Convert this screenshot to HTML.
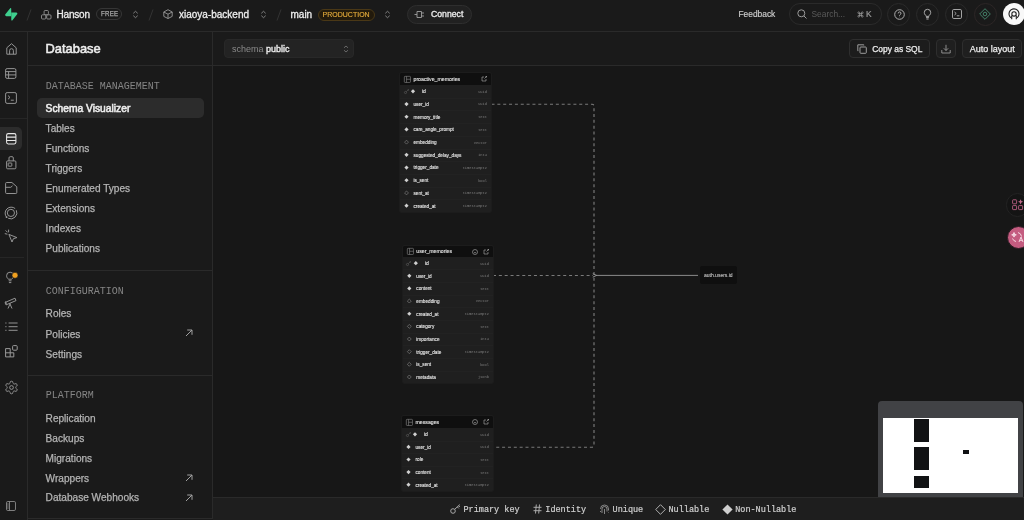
<!DOCTYPE html>
<html><head><meta charset="utf-8">
<style>
*{box-sizing:border-box;margin:0;padding:0}
html,body{width:1024px;height:520px;overflow:hidden;background:#1a1a1a;font-family:"Liberation Sans",sans-serif;color:#ededed}
#wrap{position:absolute;left:0;top:0;width:1024px;height:520px;will-change:transform}
.a{position:absolute}
.t{position:absolute;white-space:nowrap;line-height:1}
.tm{font-family:"Liberation Mono",monospace}
svg{position:absolute;overflow:visible}
#top{left:0;top:0;width:1024px;height:32px;background:#1a1a1a;border-bottom:1px solid #2a2a2a}
#rail{left:0;top:32px;width:28px;height:488px;background:#1a1a1a;border-right:1px solid #2a2a2a}
#side{left:28px;top:32px;width:185px;height:487px;background:#1a1a1a;border-right:1px solid #2a2a2a;border-bottom:1px solid #2a2a2a}
#main{left:213px;top:32px;width:811px;height:34px;background:#1a1a1a}
#canvas{left:213px;top:66px;width:811px;height:431px;background:#171717}
.item{position:absolute;left:45.6px;font-size:10.1px;color:#b4b4b4;white-space:nowrap;line-height:1;-webkit-text-stroke:0.25px #b4b4b4}
.sec{position:absolute;left:45.8px;font-family:"Liberation Mono",monospace;font-size:10px;color:#858585;white-space:nowrap;line-height:1}
.ext{position:absolute;left:185px;width:8px;height:8px}
</style></head><body><div id="wrap">
<div id="rail" class="a"></div>
<div id="side" class="a"></div>
<div id="main" class="a"></div>
<div id="canvas" class="a"></div>

<!-- TOP BAR -->
<div id="top" class="a"></div>
<svg style="left:5px;top:7.5px" width="12.5" height="12.7" viewBox="0 0 109 113"><path d="M63.7 110.3c-2.9 3.6-8.7 1.6-8.8-3l-1-67.4h45.4c8.2 0 12.8 9.5 7.7 15.9z" fill="#3ecf8e"/><path d="M45.3 2.1c2.9-3.6 8.7-1.6 8.8 3l.4 67.4H9.8c-8.2 0-12.8-9.5-7.7-15.9z" fill="#3ecf8e"/></svg>
<svg style="left:26px;top:9px" width="6" height="12"><path d="M5 0.5L1 11.5" stroke="#333" stroke-width="1"/></svg>
<!-- org icon -->
<svg style="left:41px;top:9.5px" width="10.5" height="9.5" viewBox="0 0 10.5 9.5" fill="none" stroke="#9a9a9a" stroke-width="0.85"><rect x="3.1" y="0.5" width="4.3" height="4.2" rx="1"/><rect x="0.5" y="4.8" width="4.3" height="4.2" rx="1"/><rect x="5.7" y="4.8" width="4.3" height="4.2" rx="1"/></svg>
<div class="t" style="left:56.5px;top:9.6px;font-size:10px;color:#ededed;letter-spacing:-0.2px;-webkit-text-stroke:0.3px #ededed">Hanson</div>
<div class="a" style="left:96px;top:8px;width:26px;height:12px;border:1px solid #363636;border-radius:6px"></div>
<div class="t" style="left:100.7px;top:10.1px;font-size:7.3px;color:#a8a8a8;-webkit-text-stroke:0.25px #a8a8a8;transform:scaleX(0.84);transform-origin:0 0;letter-spacing:0.3px">FREE</div>
<svg style="left:132px;top:10px" width="7" height="9" viewBox="0 0 7 9" fill="none" stroke="#8a8a8a" stroke-width="0.9"><path d="M1.3 3.3L3.5 1.3L5.7 3.3M1.3 5.7L3.5 7.7L5.7 5.7"/></svg>
<svg style="left:148px;top:9px" width="6" height="12"><path d="M5 0.5L1 11.5" stroke="#333" stroke-width="1"/></svg>
<!-- cube -->
<svg style="left:163px;top:9px" width="10" height="10" viewBox="0 0 10 10" fill="none" stroke="#9a9a9a" stroke-width="0.9"><path d="M5 0.7L9.2 3v4.4L5 9.5 0.8 7.4V3z M0.8 3L5 5.2 9.2 3 M5 5.2v4.3"/></svg>
<div class="t" style="left:179px;top:9.6px;font-size:10px;color:#ededed;-webkit-text-stroke:0.3px #ededed">xiaoya-backend</div>
<svg style="left:260px;top:10px" width="7" height="9" viewBox="0 0 7 9" fill="none" stroke="#8a8a8a" stroke-width="0.9"><path d="M1.3 3.3L3.5 1.3L5.7 3.3M1.3 5.7L3.5 7.7L5.7 5.7"/></svg>
<svg style="left:276px;top:9px" width="6" height="12"><path d="M5 0.5L1 11.5" stroke="#333" stroke-width="1"/></svg>
<div class="t" style="left:290.5px;top:9.6px;font-size:10px;color:#ededed;-webkit-text-stroke:0.3px #ededed">main</div>
<div class="a" style="left:318px;top:8.5px;width:57px;height:12.5px;border:1px solid #4a3816;background:#221a0c;border-radius:6.5px"></div>
<div class="t" style="left:322.6px;top:10.7px;font-size:7px;color:#e0a83a;-webkit-text-stroke:0.15px #e0a83a">PRODUCTION</div>
<svg style="left:384px;top:10px" width="7" height="9" viewBox="0 0 7 9" fill="none" stroke="#8a8a8a" stroke-width="0.9"><path d="M1.3 3.3L3.5 1.3L5.7 3.3M1.3 5.7L3.5 7.7L5.7 5.7"/></svg>
<div class="a" style="left:407px;top:5px;width:65px;height:19px;border:1px solid #2e2e2e;background:#212121;border-radius:10px"></div>
<svg style="left:414px;top:10px" width="11" height="9" viewBox="0 0 11 9" fill="none" stroke="#a0a0a0" stroke-width="0.9"><path d="M0.5 4.5H3M3 1.5h4.5v6H3zM7.5 3H10M7.5 6H10"/></svg>
<div class="t" style="left:431px;top:10.3px;font-size:8.7px;color:#ededed;-webkit-text-stroke:0.3px #ededed">Connect</div>

<div class="t" style="left:738.5px;top:10.2px;font-size:8.4px;color:#cfcfcf;-webkit-text-stroke:0.15px #cfcfcf">Feedback</div>
<div class="a" style="left:789px;top:3px;width:93px;height:22px;border:1px solid #2a2a2a;border-radius:11px"></div>
<svg style="left:797px;top:9px" width="10" height="10" viewBox="0 0 10 10" fill="none" stroke="#9a9a9a" stroke-width="1"><circle cx="4.3" cy="4.3" r="3.5"/><path d="M6.9 6.9L9.5 9.5"/></svg>
<div class="t" style="left:811.5px;top:10px;font-size:8.4px;color:#5a5a5a">Search...</div>
<svg style="left:857px;top:10.5px" width="7" height="7" viewBox="0 0 24 24" fill="none" stroke="#9a9a9a" stroke-width="2.6"><path d="M15 6v12a3 3 0 1 0 3-3H6a3 3 0 1 0 3 3V6a3 3 0 1 0-3 3h12a3 3 0 1 0-3-3"/></svg><div class="t" style="left:866px;top:10px;font-size:8.4px;color:#9a9a9a;-webkit-text-stroke:0.2px #9a9a9a">K</div>
<!-- circles -->
<div class="a" style="left:887px;top:3px;width:23px;height:23px;border:1px solid #2a2a2a;border-radius:50%"></div>
<svg style="left:893.5px;top:8.5px" width="11" height="11" viewBox="0 0 11 11" fill="none" stroke="#b4b4b4" stroke-width="0.95"><circle cx="5.5" cy="5.5" r="4.8"/><path d="M4.2 4.4a1.4 1.4 0 1 1 2 1.2c-.4.3-.7.5-.7 1v.2"/><circle cx="5.5" cy="7.9" r="0.4" fill="#b4b4b4" stroke="none"/></svg>
<div class="a" style="left:916px;top:3px;width:23px;height:23px;border:1px solid #2a2a2a;border-radius:50%"></div>
<svg style="left:923px;top:8px" width="9" height="12" viewBox="0 0 9 12" fill="none" stroke="#b4b4b4" stroke-width="0.95"><path d="M3.1 7.6C2 7 1.3 5.9 1.3 4.5a3.2 3.2 0 0 1 6.4 0c0 1.4-.7 2.5-1.8 3.1v.8H3.1z"/><path d="M3.1 9.6h2.8M3.4 11h2.2"/></svg>
<div class="a" style="left:945px;top:3px;width:23px;height:23px;border:1px solid #2a2a2a;border-radius:50%"></div>
<svg style="left:951.5px;top:9px" width="10" height="10" viewBox="0 0 10 10" fill="none" stroke="#b4b4b4" stroke-width="0.9"><rect x="0.5" y="0.5" width="9" height="9" rx="1.3"/><path d="M2.5 3L4.2 4.5 2.5 6M4.8 6.8H7.4"/></svg>
<div class="a" style="left:974px;top:3px;width:23px;height:23px;border:1px solid #2c2626;border-radius:50%"></div>
<svg style="left:979px;top:8px" width="12" height="12" viewBox="0 0 12 12" fill="none" stroke="#4a9275" stroke-width="0.85"><path d="M6 0.7L11.3 6 6 11.3 0.7 6z"/><circle cx="6" cy="6" r="1.8"/></svg>
<div class="a" style="left:1003px;top:3px;width:22px;height:22px;background:#f8f8f8;border-radius:50%"></div>
<svg style="left:1008px;top:8px" width="12" height="12" viewBox="0 0 12 12" fill="none" stroke="#1a1a1a" stroke-width="1.1"><path d="M2.79 9.73A5 5 0 1 1 9.21 9.73"/><circle cx="6" cy="5.9" r="2.2"/><path d="M3.7 7.4V11.3M8.3 7.4V11.3"/></svg>

<!-- RAIL -->
<svg style="left:5.5px;top:42.8px" width="11" height="12" viewBox="0 0 11 12" fill="none" stroke="#9a9a9a" stroke-width="0.95"><path d="M0.8 11.2V4.8L5.5 0.7 10.2 4.8v6.4zM3.6 11.2V7.6a1.9 1.9 0 0 1 3.8 0v3.6"/></svg>
<svg style="left:5px;top:68px" width="11.5" height="11" viewBox="0 0 11.5 11" fill="none" stroke="#9a9a9a" stroke-width="0.95"><rect x="0.6" y="0.6" width="10.3" height="9.8" rx="1.5"/><path d="M0.6 3.6H10.9M0.6 6.9H10.9M3.6 3.6v6.8"/></svg>
<svg style="left:5px;top:92px" width="12" height="12" viewBox="0 0 12 12" fill="none" stroke="#9a9a9a" stroke-width="0.95"><rect x="0.6" y="0.6" width="10.8" height="10.8" rx="1.5"/><path d="M3 3.6L5 5.4 3 7.2M5.8 8.2H8.8"/></svg>
<div class="a" style="left:0px;top:118px;width:27px;height:1px;background:#262626"></div>
<div class="a" style="left:0px;top:257px;width:24px;height:1px;background:#262626"></div>
<div class="a" style="left:-5px;top:127px;width:27px;height:23px;background:#2c2c2c;border-radius:5px"></div>
<svg style="left:5.8px;top:133.3px" width="10.5" height="11.5" viewBox="0 0 10.5 11.5" fill="none" stroke="#e8e8e8" stroke-width="1.05"><rect x="0.6" y="0.6" width="9.3" height="10.3" rx="1.6"/><path d="M0.6 4.1H9.9M0.6 7.4H9.9"/></svg>
<svg style="left:5.5px;top:156px" width="11" height="13.5" viewBox="0 0 11 13.5" fill="none" stroke="#9a9a9a" stroke-width="0.95"><path d="M3 4.9V1.9a1.2 1.2 0 0 1 1.2-1.2h1.9A1.2 1.2 0 0 1 7.3 1.9v3"/><rect x="0.6" y="4.9" width="9.3" height="7.9" rx="1"/><rect x="2.2" y="7" width="3.6" height="3.2" rx="0.4"/></svg>
<svg style="left:4.8px;top:182px" width="12.5" height="12" viewBox="0 0 12.5 12" fill="none" stroke="#9a9a9a" stroke-width="0.95"><path d="M0.6 1.5a1 1 0 0 1 1-1h5.3l4.9 4.3v5.7a1 1 0 0 1-1 1H1.6a1 1 0 0 1-1-1z"/><path d="M0.6 5.3H5.8L7.5 3.8"/></svg>
<svg style="left:4px;top:205.5px" width="14" height="14" viewBox="0 0 14 14" fill="none" stroke="#9a9a9a" stroke-width="0.95"><circle cx="6.9" cy="6.9" r="3.6"/><path d="M2.6 11.2A6.1 6.1 0 0 1 11.2 2.6M12.3 4.2A6.1 6.1 0 0 1 4.2 12.3"/><circle cx="2.6" cy="11.2" r="0.9" fill="#9a9a9a" stroke="none"/></svg>
<svg style="left:4px;top:228px" width="14" height="15" viewBox="0 0 14 15" fill="none" stroke="#9a9a9a" stroke-width="0.95"><path d="M4.9 6.4L12.9 9.6 9.4 10.7 8 14z"/><path d="M4.6 1.6V4.3M0.8 5.6L3.4 6.2M1.6 2.4L3.5 4.3"/></svg>
<svg style="left:5px;top:270px" width="14" height="15" viewBox="0 0 14 15" fill="none" stroke="#9a9a9a" stroke-width="0.95"><path d="M3.6 9.2C2.4 8.5 1.6 7.2 1.6 5.7a3.5 3.5 0 0 1 7 0c0 1.5-.8 2.8-2 3.5z"/><path d="M3.7 10.8h2.8M3.9 12.6h2.4"/><circle cx="10" cy="5.3" r="3" fill="#f0a020" stroke="#1a1a1a" stroke-width="0.6"/></svg>
<svg style="left:4px;top:296px" width="14" height="13" viewBox="0 0 14 13" fill="none" stroke="#9a9a9a" stroke-width="0.95"><path d="M1 6.5l10-4.3 1 2.4-10 4.3z M6 8l-2 4.5M6 8l2 4.5M6 8v-1"/><path d="M1.5 5.5l1 2.3"/></svg>
<svg style="left:4.5px;top:321px" width="14" height="11" viewBox="0 0 14 11" fill="none" stroke="#9a9a9a" stroke-width="0.95"><path d="M0.3 2h1.2M3.6 2h9M0.3 5.7h1.2M3.6 5.7h9M0.3 9.3h1.2M3.6 9.3h9"/></svg>
<svg style="left:4.8px;top:345px" width="13" height="12.5" viewBox="0 0 13 12.5" fill="none" stroke="#9a9a9a" stroke-width="1"><path d="M0.6 3.6h4.6v8.3H0.6zM0.6 7.8h8.2v4.1H5.2"/><rect x="7.6" y="0.6" width="4.6" height="4.6" rx="0.9"/></svg>
<svg style="left:3.6px;top:380.4px" width="15" height="15" viewBox="0 0 24 24" fill="none" stroke="#9a9a9a" stroke-width="1.5"><path d="M12.22 2h-.44a2 2 0 0 0-2 2v.18a2 2 0 0 1-1 1.73l-.43.25a2 2 0 0 1-2 0l-.15-.08a2 2 0 0 0-2.73.73l-.22.38a2 2 0 0 0 .73 2.73l.15.1a2 2 0 0 1 1 1.72v.51a2 2 0 0 1-1 1.74l-.15.09a2 2 0 0 0-.73 2.73l.22.38a2 2 0 0 0 2.73.73l.15-.08a2 2 0 0 1 2 0l.43.25a2 2 0 0 1 1 1.73V20a2 2 0 0 0 2 2h.44a2 2 0 0 0 2-2v-.18a2 2 0 0 1 1-1.73l.43-.25a2 2 0 0 1 2 0l.15.08a2 2 0 0 0 2.73-.73l.22-.39a2 2 0 0 0-.73-2.73l-.15-.08a2 2 0 0 1-1-1.74v-.5a2 2 0 0 1 1-1.74l.15-.09a2 2 0 0 0 .73-2.73l-.22-.38a2 2 0 0 0-2.73-.73l-.15.08a2 2 0 0 1-2 0l-.43-.25a2 2 0 0 1-1-1.73V4a2 2 0 0 0-2-2z"/><circle cx="12" cy="12" r="3"/></svg>
<svg style="left:6px;top:500.5px" width="10" height="10" viewBox="0 0 10 10" fill="none" stroke="#8a8a8a" stroke-width="0.9"><rect x="0.5" y="0.5" width="9" height="9" rx="1.3"/><path d="M3.5 0.5v9M1.2 3h1.5M1.2 5h1.5M1.2 7h1.5"/></svg>

<!-- SIDEBAR -->
<div class="t" style="left:45.5px;top:43.3px;font-size:12.9px;font-weight:400;color:#ededed;-webkit-text-stroke:0.55px #ededed">Database</div>
<div class="a" style="left:28px;top:65px;width:184px;height:1px;background:#2a2a2a"></div>
<div class="sec" style="top:81.7px">DATABASE MANAGEMENT</div>
<div class="a" style="left:37px;top:97.8px;width:167px;height:20.2px;background:#2c2c2c;border-radius:5px"></div>
<div class="item" style="top:104.0px;color:#ededed;font-size:10.25px;-webkit-text-stroke:0.55px #ededed">Schema Visualizer</div>
<div class="item" style="top:124.0px">Tables</div>
<div class="item" style="top:144.0px">Functions</div>
<div class="item" style="top:164.0px">Triggers</div>
<div class="item" style="top:184.0px">Enumerated Types</div>
<div class="item" style="top:204.0px">Extensions</div>
<div class="item" style="top:224.0px">Indexes</div>
<div class="item" style="top:244.0px">Publications</div>
<div class="a" style="left:28px;top:270px;width:184px;height:1px;background:#2a2a2a"></div>
<div class="sec" style="top:287.2px">CONFIGURATION</div>
<div class="item" style="top:309.3px">Roles</div>
<div class="item" style="top:329.5px">Policies</div>
<div class="item" style="top:349.7px">Settings</div>
<svg class="ext" style="top:328.5px" viewBox="0 0 8 8" fill="none" stroke="#a8a8a8" stroke-width="0.95"><path d="M1 7L7 1M2.2 1H7v4.8"/></svg>
<div class="a" style="left:28px;top:375px;width:184px;height:1px;background:#2a2a2a"></div>
<div class="sec" style="top:391.2px">PLATFORM</div>
<div class="item" style="top:413.8px">Replication</div>
<div class="item" style="top:433.7px">Backups</div>
<div class="item" style="top:453.6px">Migrations</div>
<div class="item" style="top:473.5px">Wrappers</div>
<div class="item" style="top:493.4px">Database Webhooks</div>
<svg class="ext" style="top:473.5px" viewBox="0 0 8 8" fill="none" stroke="#a8a8a8" stroke-width="0.95"><path d="M1 7L7 1M2.2 1H7v4.8"/></svg>
<svg class="ext" style="top:493.5px" viewBox="0 0 8 8" fill="none" stroke="#a8a8a8" stroke-width="0.95"><path d="M1 7L7 1M2.2 1H7v4.8"/></svg>

<!-- TOOLBAR -->
<div class="a" style="left:213px;top:65px;width:811px;height:1px;background:#2a2a2a"></div>
<div class="a" style="left:224px;top:39px;width:130px;height:19px;background:#232323;border:1px solid #282828;border-radius:4px"></div>
<div class="t" style="left:232px;top:45.3px;font-size:9px;color:#8a8a8a">schema <span style="color:#ededed;-webkit-text-stroke:0.35px #ededed">public</span></div>
<svg style="left:342.5px;top:44.5px" width="6" height="8" viewBox="0 0 6 8" fill="none" stroke="#7a7a7a" stroke-width="0.8"><path d="M1 2.8L3 1 5 2.8M1 5.2L3 7 5 5.2"/></svg>
<div class="a" style="left:849px;top:39px;width:81px;height:19px;background:#1c1c1c;border:1px solid #2e2e2e;border-radius:4px"></div>
<svg style="left:857px;top:44px" width="10" height="10" viewBox="0 0 10 10" fill="none" stroke="#b4b4b4" stroke-width="0.85"><rect x="3" y="3" width="6.3" height="6.3" rx="0.8"/><path d="M1.3 6.8H0.8V0.8h6v0.6"/></svg>
<div class="t" style="left:872.2px;top:45.2px;font-size:8.45px;color:#ededed;-webkit-text-stroke:0.25px #ededed">Copy as SQL</div>
<div class="a" style="left:936px;top:39px;width:20px;height:19px;background:#1f1f1f;border:1px solid #2e2e2e;border-radius:4px"></div>
<svg style="left:941px;top:43.5px" width="10" height="10" viewBox="0 0 10 10" fill="none" stroke="#a0a0a0" stroke-width="0.85"><path d="M5 0.8V6.5M2.8 4.3L5 6.5 7.2 4.3M0.8 6v3h8.4V6"/></svg>
<div class="a" style="left:962px;top:39px;width:60px;height:19px;background:#1f1f1f;border:1px solid #2e2e2e;border-radius:4px"></div>
<div class="t" style="left:969.7px;top:45.2px;font-size:9px;color:#ededed;-webkit-text-stroke:0.25px #ededed">Auto layout</div>

<!-- EDGES -->
<svg style="left:0;top:0" width="1024" height="520" fill="none">
<path d="M491.5 104.2H592Q594 104.2 594 106.2V445Q594 447.2 592 447.2H493" stroke="#7a7a7a" stroke-width="1.15" stroke-dasharray="3 2.85"/>
<path d="M493 275.5H593" stroke="#7a7a7a" stroke-width="1.15" stroke-dasharray="3 2.85"/>
<path d="M596 275.4H698" stroke="#8a8a8a" stroke-width="1"/>
<path d="M592.8 273.6L596.5 275.4 592.8 277.2" stroke="#9a9a9a" stroke-width="0.9"/>
</svg>
<div class="a" style="left:700px;top:266px;width:37px;height:18px;background:#0f0f0f;border-radius:2px"></div>
<div class="t" style="left:704px;top:273.2px;font-size:5px;color:#e8e8e8">auth.users.id</div>

<!-- FLOAT BUTTONS -->
<div class="a" style="left:1005.8px;top:193px;width:23.5px;height:23.5px;background:#141414;border:1px solid #232323;border-radius:50%"></div>
<svg style="left:1011.8px;top:199px" width="12" height="12" viewBox="0 0 12 12" fill="none" stroke="#b05c7c" stroke-width="0.95"><rect x="0.6" y="0.8" width="4" height="4" rx="0.6"/><rect x="0.6" y="6.6" width="4" height="4" rx="0.6"/><rect x="6.6" y="6.6" width="4" height="4" rx="0.6"/><path d="M8.6 0.2Q8.9 2.5 11.2 2.8 8.9 3.1 8.6 5.4 8.3 3.1 6 2.8 8.3 2.5 8.6 0.2z" fill="#c06a8a" stroke="none"/></svg>
<div class="a" style="left:1006.5px;top:226px;width:23px;height:23px;background:#c45c80;border:1.5px solid #2a1a22;border-radius:50%"></div>
<svg style="left:1010px;top:230px" width="14" height="14" viewBox="0 0 14 14" fill="none" stroke="#f4d4df" stroke-width="1"><path d="M4 2.5l0.7 1.6 1.6 0.7-1.6 0.7L4 7.1 3.3 5.5 1.7 4.8 3.3 4.1z" fill="#f4d4df"/><path d="M8 2.5a4.6 4.6 0 0 1 3.5 4M2.5 8.5A4.6 4.6 0 0 0 6 11.5M9 12L11 7l2 5M9.7 10.3h2.6"/></svg>

<!-- MINIMAP -->
<div class="a" style="left:878px;top:401px;width:145px;height:97px;background:#414245;border-radius:4px 4px 0 0"></div>
<div class="a" style="left:883px;top:418px;width:135px;height:75px;background:#ffffff"></div>
<div class="a" style="left:914px;top:419px;width:15px;height:23px;background:#111214"></div>
<div class="a" style="left:914px;top:447px;width:15px;height:22.5px;background:#111214"></div>
<div class="a" style="left:914px;top:475.5px;width:15px;height:12.5px;background:#111214"></div>
<div class="a" style="left:963px;top:450px;width:6px;height:3.7px;background:#111214"></div>

<!-- LEGEND BAR -->
<div class="a" style="left:213px;top:497px;width:811px;height:23px;background:#1e1e1e;border-top:1px solid #2a2a2a"></div>
<svg style="left:449.5px;top:504px" width="11" height="10" viewBox="0 0 11 10" fill="none" stroke="#b4b4b4" stroke-width="0.9"><circle cx="3" cy="7" r="2.3"/><path d="M4.7 5.3L9.8 0.6M7.3 2.9l1.5 1.5M8.6 1.7l1.3 1.3"/></svg>
<div class="t mono" style="left:463.5px;top:506.2px;font-size:8.5px;color:#d0d0d0;font-family:'Liberation Mono',monospace;-webkit-text-stroke:0.2px #d0d0d0">Primary key</div>
<svg style="left:532.5px;top:504px" width="9" height="10" viewBox="0 0 9 10" fill="none" stroke="#b0b0b0" stroke-width="0.95"><path d="M0.5 3.3H8.5M0.5 6.7H8.5M3.3 0.5L2.5 9.5M6.5 0.5L5.7 9.5"/></svg>
<div class="t mono" style="left:545.3px;top:506.2px;font-size:8.5px;color:#d0d0d0;font-family:'Liberation Mono',monospace;-webkit-text-stroke:0.2px #d0d0d0">Identity</div>
<svg style="left:599px;top:503.5px" width="11" height="11" viewBox="0 0 11 11" fill="none" stroke="#a0a0a0" stroke-width="0.8"><path d="M1.5 5a4 4 0 0 1 8 0v1.5M3 9V5a2.5 2.5 0 0 1 5 0v2.5M5.5 5v5M9.5 8.5v.5M1.5 7v1"/></svg>
<div class="t mono" style="left:612.6px;top:506.2px;font-size:8.5px;color:#d0d0d0;font-family:'Liberation Mono',monospace;-webkit-text-stroke:0.2px #d0d0d0">Unique</div>
<svg style="left:655px;top:503.8px" width="11" height="11" viewBox="0 0 11 11" fill="none" stroke="#c0c0c0" stroke-width="0.9"><path d="M5.5 0.7L10.3 5.5 5.5 10.3 0.7 5.5z"/></svg>
<div class="t mono" style="left:668.5px;top:506.2px;font-size:8.5px;color:#d0d0d0;font-family:'Liberation Mono',monospace;-webkit-text-stroke:0.2px #d0d0d0">Nullable</div>
<svg style="left:721.5px;top:503.8px" width="11" height="11" viewBox="0 0 11 11"><path d="M5.5 0.4L10.6 5.5 5.5 10.6 0.4 5.5z" fill="#cfcfcf"/></svg>
<div class="t mono" style="left:735.2px;top:506.2px;font-size:8.5px;color:#d0d0d0;font-family:'Liberation Mono',monospace;-webkit-text-stroke:0.2px #d0d0d0">Non-Nullable</div>

<!-- CANVAS -->
<div class="a" style="left:400px;top:73px;width:91px;height:139.0px;background:#1f1f1f;border-radius:1.5px;overflow:hidden;box-shadow:0 0 0 1px #1c1c1c">
<div class="a" style="left:0;top:0;width:91px;height:12px;background:#0f0f0f"></div>
<div class="a" style="left:0;top:24.70px;width:91px;height:0.5px;background:#222222"></div>
<div class="a" style="left:0;top:37.40px;width:91px;height:0.5px;background:#222222"></div>
<div class="a" style="left:0;top:50.10px;width:91px;height:0.5px;background:#222222"></div>
<div class="a" style="left:0;top:62.80px;width:91px;height:0.5px;background:#222222"></div>
<div class="a" style="left:0;top:75.50px;width:91px;height:0.5px;background:#222222"></div>
<div class="a" style="left:0;top:88.20px;width:91px;height:0.5px;background:#222222"></div>
<div class="a" style="left:0;top:100.90px;width:91px;height:0.5px;background:#222222"></div>
<div class="a" style="left:0;top:113.60px;width:91px;height:0.5px;background:#222222"></div>
<div class="a" style="left:0;top:126.30px;width:91px;height:0.5px;background:#222222"></div>
</div>
<svg style="left:404.2px;top:75.7px" width="6.8" height="6.8" viewBox="0 0 24 24" fill="none" stroke="#8a8a8a" stroke-width="2.1"><rect x="1.2" y="1.2" width="21.6" height="21.6" rx="2.5"/><path d="M9 1.2v21.6M9 11.5h13.8"/></svg>
<div class="t" style="left:413.5px;top:77.4px;font-size:5.2px;color:#e4e4e4;-webkit-text-stroke:0.12px #e4e4e4">proactive_memories</div>
<svg style="left:481px;top:76px" width="6" height="6" viewBox="0 0 6 6" fill="none" stroke="#b0b0b0" stroke-width="0.6"><path d="M3 1H1v4h4V3M3.5 2.5L5.5 0.5"/><circle cx="5.2" cy="0.8" r="0.7" fill="#b0b0b0" stroke="none"/></svg>
<svg style="left:403.5px;top:88.85px" width="5" height="5" viewBox="0 0 5 5" fill="none" stroke="#6a6a6a" stroke-width="0.5"><circle cx="1.5" cy="3.5" r="1.1"/><path d="M2.3 2.7L4.5 0.5M3.6 0.7h0.9v0.9"/></svg>
<svg style="left:0;top:0" width="1" height="1"><path d="M413 89.25L415.1 91.35L413 93.44999999999999L410.9 91.35z" fill="#d0d0d0" stroke="none" stroke-width="0.6"/></svg>
<div class="t" style="left:422px;top:88.75px;font-size:5px;color:#e8e8e8;-webkit-text-stroke:0.12px #e8e8e8">id</div>
<div class="t tm" style="right:537px;top:90.75px;font-size:3.7px;color:#7c7c7c">uuid</div>
<svg style="left:0;top:0" width="1" height="1"><path d="M406.5 101.95L408.6 104.05L406.5 106.14999999999999L404.4 104.05z" fill="#d0d0d0" stroke="none" stroke-width="0.6"/></svg>
<div class="t" style="left:413.5px;top:102.95px;font-size:4.7px;color:#e4e4e4;-webkit-text-stroke:0.12px #e4e4e4">user_id</div>
<div class="t tm" style="right:537px;top:103.45px;font-size:3.7px;color:#7c7c7c">uuid</div>
<svg style="left:0;top:0" width="1" height="1"><path d="M406.5 114.65L408.6 116.75L406.5 118.85L404.4 116.75z" fill="#d0d0d0" stroke="none" stroke-width="0.6"/></svg>
<div class="t" style="left:413.5px;top:115.65px;font-size:4.7px;color:#e4e4e4;-webkit-text-stroke:0.12px #e4e4e4">memory_title</div>
<div class="t tm" style="right:537px;top:116.15px;font-size:3.7px;color:#7c7c7c">text</div>
<svg style="left:0;top:0" width="1" height="1"><path d="M406.5 127.35L408.6 129.45L406.5 131.54999999999998L404.4 129.45z" fill="#d0d0d0" stroke="none" stroke-width="0.6"/></svg>
<div class="t" style="left:413.5px;top:128.35px;font-size:4.7px;color:#e4e4e4;-webkit-text-stroke:0.12px #e4e4e4">care_angle_prompt</div>
<div class="t tm" style="right:537px;top:128.85px;font-size:3.7px;color:#7c7c7c">text</div>
<svg style="left:0;top:0" width="1" height="1"><path d="M406.5 140.20000000000002L408.45 142.15L406.5 144.1L404.55 142.15z" fill="none" stroke="#8a8a8a" stroke-width="0.6"/></svg>
<div class="t" style="left:413.5px;top:141.05px;font-size:4.7px;color:#e4e4e4;-webkit-text-stroke:0.12px #e4e4e4">embedding</div>
<div class="t tm" style="right:537px;top:141.55px;font-size:3.7px;color:#7c7c7c">vector</div>
<svg style="left:0;top:0" width="1" height="1"><path d="M406.5 152.75L408.6 154.85L406.5 156.95L404.4 154.85z" fill="#d0d0d0" stroke="none" stroke-width="0.6"/></svg>
<div class="t" style="left:413.5px;top:153.75px;font-size:4.7px;color:#e4e4e4;-webkit-text-stroke:0.12px #e4e4e4">suggested_delay_days</div>
<div class="t tm" style="right:537px;top:154.25px;font-size:3.7px;color:#7c7c7c">int4</div>
<svg style="left:0;top:0" width="1" height="1"><path d="M406.5 165.45L408.6 167.54999999999998L406.5 169.64999999999998L404.4 167.54999999999998z" fill="#d0d0d0" stroke="none" stroke-width="0.6"/></svg>
<div class="t" style="left:413.5px;top:166.45px;font-size:4.7px;color:#e4e4e4;-webkit-text-stroke:0.12px #e4e4e4">trigger_date</div>
<div class="t tm" style="right:537px;top:166.95px;font-size:3.7px;color:#7c7c7c">timestamptz</div>
<svg style="left:0;top:0" width="1" height="1"><path d="M406.5 178.14999999999998L408.6 180.24999999999997L406.5 182.34999999999997L404.4 180.24999999999997z" fill="#d0d0d0" stroke="none" stroke-width="0.6"/></svg>
<div class="t" style="left:413.5px;top:179.15px;font-size:4.7px;color:#e4e4e4;-webkit-text-stroke:0.12px #e4e4e4">is_sent</div>
<div class="t tm" style="right:537px;top:179.65px;font-size:3.7px;color:#7c7c7c">bool</div>
<svg style="left:0;top:0" width="1" height="1"><path d="M406.5 191.0L408.45 192.95L406.5 194.89999999999998L404.55 192.95z" fill="none" stroke="#8a8a8a" stroke-width="0.6"/></svg>
<div class="t" style="left:413.5px;top:191.85px;font-size:4.7px;color:#e4e4e4;-webkit-text-stroke:0.12px #e4e4e4">sent_at</div>
<div class="t tm" style="right:537px;top:192.35px;font-size:3.7px;color:#7c7c7c">timestamptz</div>
<svg style="left:0;top:0" width="1" height="1"><path d="M406.5 203.55L408.6 205.65L406.5 207.75L404.4 205.65z" fill="#d0d0d0" stroke="none" stroke-width="0.6"/></svg>
<div class="t" style="left:413.5px;top:204.55px;font-size:4.7px;color:#e4e4e4;-webkit-text-stroke:0.12px #e4e4e4">created_at</div>
<div class="t tm" style="right:537px;top:205.05px;font-size:3.7px;color:#7c7c7c">timestamptz</div>
<div class="a" style="left:402.8px;top:245.8px;width:90.2px;height:137.5px;background:#1f1f1f;border-radius:1.5px;overflow:hidden;box-shadow:0 0 0 1px #1c1c1c">
<div class="a" style="left:0;top:0;width:90.2px;height:11px;background:#0f0f0f"></div>
<div class="a" style="left:0;top:23.65px;width:90.2px;height:0.5px;background:#222222"></div>
<div class="a" style="left:0;top:36.30px;width:90.2px;height:0.5px;background:#222222"></div>
<div class="a" style="left:0;top:48.95px;width:90.2px;height:0.5px;background:#222222"></div>
<div class="a" style="left:0;top:61.60px;width:90.2px;height:0.5px;background:#222222"></div>
<div class="a" style="left:0;top:74.25px;width:90.2px;height:0.5px;background:#222222"></div>
<div class="a" style="left:0;top:86.90px;width:90.2px;height:0.5px;background:#222222"></div>
<div class="a" style="left:0;top:99.55px;width:90.2px;height:0.5px;background:#222222"></div>
<div class="a" style="left:0;top:112.20px;width:90.2px;height:0.5px;background:#222222"></div>
<div class="a" style="left:0;top:124.85px;width:90.2px;height:0.5px;background:#222222"></div>
</div>
<svg style="left:407.0px;top:248.0px" width="6.8" height="6.8" viewBox="0 0 24 24" fill="none" stroke="#8a8a8a" stroke-width="2.1"><rect x="1.2" y="1.2" width="21.6" height="21.6" rx="2.5"/><path d="M9 1.2v21.6M9 11.5h13.8"/></svg>
<div class="t" style="left:416.3px;top:249.20000000000002px;font-size:5.2px;color:#e4e4e4;-webkit-text-stroke:0.12px #e4e4e4">user_memories</div>
<svg style="left:483.0px;top:248.8px" width="6" height="6" viewBox="0 0 6 6" fill="none" stroke="#b0b0b0" stroke-width="0.6"><path d="M3 1H1v4h4V3M3.5 2.5L5.5 0.5"/><circle cx="5.2" cy="0.8" r="0.7" fill="#b0b0b0" stroke="none"/></svg>
<svg style="left:472.0px;top:248.8px" width="6" height="6" viewBox="0 0 6 6" fill="none" stroke="#b0b0b0" stroke-width="0.6"><circle cx="3" cy="3" r="2.5"/><path d="M2 3.6h2"/></svg>
<svg style="left:406.3px;top:260.62px" width="5" height="5" viewBox="0 0 5 5" fill="none" stroke="#6a6a6a" stroke-width="0.5"><circle cx="1.5" cy="3.5" r="1.1"/><path d="M2.3 2.7L4.5 0.5M3.6 0.7h0.9v0.9"/></svg>
<svg style="left:0;top:0" width="1" height="1"><path d="M415.8 261.025L417.90000000000003 263.125L415.8 265.225L413.7 263.125z" fill="#d0d0d0" stroke="none" stroke-width="0.6"/></svg>
<div class="t" style="left:424.8px;top:260.52px;font-size:5px;color:#e8e8e8;-webkit-text-stroke:0.12px #e8e8e8">id</div>
<div class="t tm" style="right:535.0px;top:262.52px;font-size:3.7px;color:#7c7c7c">uuid</div>
<svg style="left:0;top:0" width="1" height="1"><path d="M409.3 273.67499999999995L411.40000000000003 275.775L409.3 277.875L407.2 275.775z" fill="#d0d0d0" stroke="none" stroke-width="0.6"/></svg>
<div class="t" style="left:416.3px;top:274.67px;font-size:4.7px;color:#e4e4e4;-webkit-text-stroke:0.12px #e4e4e4">user_id</div>
<div class="t tm" style="right:535.0px;top:275.17px;font-size:3.7px;color:#7c7c7c">uuid</div>
<svg style="left:0;top:0" width="1" height="1"><path d="M409.3 286.325L411.40000000000003 288.425L409.3 290.52500000000003L407.2 288.425z" fill="#d0d0d0" stroke="none" stroke-width="0.6"/></svg>
<div class="t" style="left:416.3px;top:287.32px;font-size:4.7px;color:#e4e4e4;-webkit-text-stroke:0.12px #e4e4e4">content</div>
<div class="t tm" style="right:535.0px;top:287.82px;font-size:3.7px;color:#7c7c7c">text</div>
<svg style="left:0;top:0" width="1" height="1"><path d="M409.3 299.125L411.25 301.075L409.3 303.025L407.35 301.075z" fill="none" stroke="#8a8a8a" stroke-width="0.6"/></svg>
<div class="t" style="left:416.3px;top:299.97px;font-size:4.7px;color:#e4e4e4;-webkit-text-stroke:0.12px #e4e4e4">embedding</div>
<div class="t tm" style="right:535.0px;top:300.47px;font-size:3.7px;color:#7c7c7c">vector</div>
<svg style="left:0;top:0" width="1" height="1"><path d="M409.3 311.625L411.40000000000003 313.725L409.3 315.82500000000005L407.2 313.725z" fill="#d0d0d0" stroke="none" stroke-width="0.6"/></svg>
<div class="t" style="left:416.3px;top:312.62px;font-size:4.7px;color:#e4e4e4;-webkit-text-stroke:0.12px #e4e4e4">created_at</div>
<div class="t tm" style="right:535.0px;top:313.12px;font-size:3.7px;color:#7c7c7c">timestamptz</div>
<svg style="left:0;top:0" width="1" height="1"><path d="M409.3 324.425L411.25 326.375L409.3 328.325L407.35 326.375z" fill="none" stroke="#8a8a8a" stroke-width="0.6"/></svg>
<div class="t" style="left:416.3px;top:325.27px;font-size:4.7px;color:#e4e4e4;-webkit-text-stroke:0.12px #e4e4e4">category</div>
<div class="t tm" style="right:535.0px;top:325.77px;font-size:3.7px;color:#7c7c7c">text</div>
<svg style="left:0;top:0" width="1" height="1"><path d="M409.3 337.07500000000005L411.25 339.02500000000003L409.3 340.975L407.35 339.02500000000003z" fill="none" stroke="#8a8a8a" stroke-width="0.6"/></svg>
<div class="t" style="left:416.3px;top:337.93px;font-size:4.7px;color:#e4e4e4;-webkit-text-stroke:0.12px #e4e4e4">importance</div>
<div class="t tm" style="right:535.0px;top:338.43px;font-size:3.7px;color:#7c7c7c">int4</div>
<svg style="left:0;top:0" width="1" height="1"><path d="M409.3 349.725L411.25 351.675L409.3 353.625L407.35 351.675z" fill="none" stroke="#8a8a8a" stroke-width="0.6"/></svg>
<div class="t" style="left:416.3px;top:350.57px;font-size:4.7px;color:#e4e4e4;-webkit-text-stroke:0.12px #e4e4e4">trigger_date</div>
<div class="t tm" style="right:535.0px;top:351.07px;font-size:3.7px;color:#7c7c7c">timestamptz</div>
<svg style="left:0;top:0" width="1" height="1"><path d="M409.3 362.375L411.25 364.325L409.3 366.275L407.35 364.325z" fill="none" stroke="#8a8a8a" stroke-width="0.6"/></svg>
<div class="t" style="left:416.3px;top:363.22px;font-size:4.7px;color:#e4e4e4;-webkit-text-stroke:0.12px #e4e4e4">is_sent</div>
<div class="t tm" style="right:535.0px;top:363.72px;font-size:3.7px;color:#7c7c7c">bool</div>
<svg style="left:0;top:0" width="1" height="1"><path d="M409.3 375.02500000000003L411.25 376.975L409.3 378.925L407.35 376.975z" fill="none" stroke="#8a8a8a" stroke-width="0.6"/></svg>
<div class="t" style="left:416.3px;top:375.88px;font-size:4.7px;color:#e4e4e4;-webkit-text-stroke:0.12px #e4e4e4">metadata</div>
<div class="t tm" style="right:535.0px;top:376.38px;font-size:3.7px;color:#7c7c7c">jsonb</div>
<div class="a" style="left:402px;top:416px;width:91px;height:75.0px;background:#1f1f1f;border-radius:1.5px;overflow:hidden;box-shadow:0 0 0 1px #1c1c1c">
<div class="a" style="left:0;top:0;width:91px;height:12px;background:#0f0f0f"></div>
<div class="a" style="left:0;top:24.60px;width:91px;height:0.5px;background:#222222"></div>
<div class="a" style="left:0;top:37.20px;width:91px;height:0.5px;background:#222222"></div>
<div class="a" style="left:0;top:49.80px;width:91px;height:0.5px;background:#222222"></div>
<div class="a" style="left:0;top:62.40px;width:91px;height:0.5px;background:#222222"></div>
</div>
<svg style="left:406.2px;top:418.7px" width="6.8" height="6.8" viewBox="0 0 24 24" fill="none" stroke="#8a8a8a" stroke-width="2.1"><rect x="1.2" y="1.2" width="21.6" height="21.6" rx="2.5"/><path d="M9 1.2v21.6M9 11.5h13.8"/></svg>
<div class="t" style="left:415.5px;top:420.4px;font-size:5.2px;color:#e4e4e4;-webkit-text-stroke:0.12px #e4e4e4">messages</div>
<svg style="left:483px;top:419px" width="6" height="6" viewBox="0 0 6 6" fill="none" stroke="#b0b0b0" stroke-width="0.6"><path d="M3 1H1v4h4V3M3.5 2.5L5.5 0.5"/><circle cx="5.2" cy="0.8" r="0.7" fill="#b0b0b0" stroke="none"/></svg>
<svg style="left:472px;top:419px" width="6" height="6" viewBox="0 0 6 6" fill="none" stroke="#b0b0b0" stroke-width="0.6"><circle cx="3" cy="3" r="2.5"/><path d="M2 3.6h2"/></svg>
<svg style="left:405.5px;top:431.80px" width="5" height="5" viewBox="0 0 5 5" fill="none" stroke="#6a6a6a" stroke-width="0.5"><circle cx="1.5" cy="3.5" r="1.1"/><path d="M2.3 2.7L4.5 0.5M3.6 0.7h0.9v0.9"/></svg>
<svg style="left:0;top:0" width="1" height="1"><path d="M415 432.2L417.1 434.3L415 436.40000000000003L412.9 434.3z" fill="#d0d0d0" stroke="none" stroke-width="0.6"/></svg>
<div class="t" style="left:424px;top:431.70px;font-size:5px;color:#e8e8e8;-webkit-text-stroke:0.12px #e8e8e8">id</div>
<div class="t tm" style="right:535px;top:433.70px;font-size:3.7px;color:#7c7c7c">uuid</div>
<svg style="left:0;top:0" width="1" height="1"><path d="M408.5 444.8L410.6 446.90000000000003L408.5 449.00000000000006L406.4 446.90000000000003z" fill="#d0d0d0" stroke="none" stroke-width="0.6"/></svg>
<div class="t" style="left:415.5px;top:445.80px;font-size:4.7px;color:#e4e4e4;-webkit-text-stroke:0.12px #e4e4e4">user_id</div>
<div class="t tm" style="right:535px;top:446.30px;font-size:3.7px;color:#7c7c7c">uuid</div>
<svg style="left:0;top:0" width="1" height="1"><path d="M408.5 457.4L410.6 459.5L408.5 461.6L406.4 459.5z" fill="#d0d0d0" stroke="none" stroke-width="0.6"/></svg>
<div class="t" style="left:415.5px;top:458.40px;font-size:4.7px;color:#e4e4e4;-webkit-text-stroke:0.12px #e4e4e4">role</div>
<div class="t tm" style="right:535px;top:458.90px;font-size:3.7px;color:#7c7c7c">text</div>
<svg style="left:0;top:0" width="1" height="1"><path d="M408.5 470.0L410.6 472.1L408.5 474.20000000000005L406.4 472.1z" fill="#d0d0d0" stroke="none" stroke-width="0.6"/></svg>
<div class="t" style="left:415.5px;top:471.00px;font-size:4.7px;color:#e4e4e4;-webkit-text-stroke:0.12px #e4e4e4">content</div>
<div class="t tm" style="right:535px;top:471.50px;font-size:3.7px;color:#7c7c7c">text</div>
<svg style="left:0;top:0" width="1" height="1"><path d="M408.5 482.59999999999997L410.6 484.7L408.5 486.8L406.4 484.7z" fill="#d0d0d0" stroke="none" stroke-width="0.6"/></svg>
<div class="t" style="left:415.5px;top:483.60px;font-size:4.7px;color:#e4e4e4;-webkit-text-stroke:0.12px #e4e4e4">created_at</div>
<div class="t tm" style="right:535px;top:484.10px;font-size:3.7px;color:#7c7c7c">timestamptz</div>
</div></body></html>
